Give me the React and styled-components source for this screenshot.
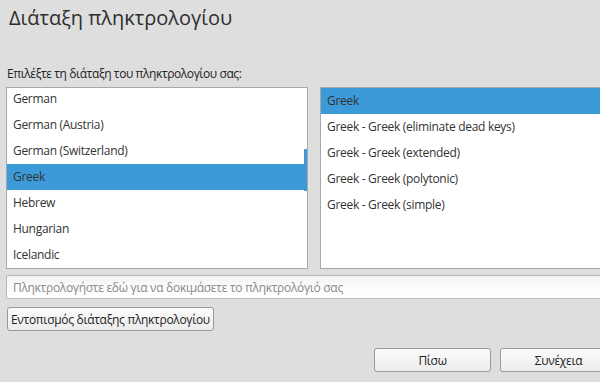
import React from "react";
import styled, { createGlobalStyle } from "styled-components";

const Global = createGlobalStyle`
  html, body { margin: 0; padding: 0; }
  body {
    background: #dedede;
    font-family: "Open Sans", "Noto Sans", sans-serif;
    color: #333;
    overflow: hidden;
    width: 600px;
    height: 382px;
  }
`;

const Page = styled.div`
  width: 600px;
  height: 382px;
  padding: 0 0 0 6px;
  box-sizing: border-box;
  display: flex;
  flex-direction: column;
  overflow: hidden;
`;

const Title = styled.h1`
  margin: 4px 0 0 3px;
  font-size: 20px;
  font-weight: 400;
  line-height: 28px;
  color: #2e2e2e;
`;

const Label = styled.div`
  margin: 34px 0 0 1px;
  font-size: 12px;
  line-height: 16px;
  letter-spacing: -0.4px;
  color: #222;
`;

const Lists = styled.div`
  display: flex;
  gap: 12px;
  margin-top: 5px;
  height: 182px;
`;

const ListBox = styled.div`
  position: relative;
  flex: 0 0 ${(p) => p.$w}px;
  height: 100%;
  box-sizing: border-box;
  background: #fff;
  border: 1px solid #a8a8a8;
  overflow: hidden;
`;

const Rows = styled.div`
  margin-top: ${(p) => p.$offset}px;
`;

const Row = styled.div`
  height: 26px;
  line-height: 26px;
  padding-left: 6px;
  font-size: 12px;
  letter-spacing: -0.3px;
  color: #333;
  background: ${(p) => (p.$selected ? "#3d9ad9" : "transparent")};
  white-space: nowrap;
`;

const Thumb = styled.div`
  position: absolute;
  right: 0;
  top: 61px;
  width: 3px;
  height: 42px;
  background: #3d9ad9;
`;

const Input = styled.input`
  margin-top: 6px;
  flex: 0 0 24px;
  width: 640px;
  height: 24px;
  box-sizing: border-box;
  border: 1px solid #b8b8b8;
  border-radius: 2px;
  background: linear-gradient(#f2f2f2, #fafafa 40%, #ffffff);
  padding: 0 6px;
  font-family: inherit;
  font-size: 12px;
  letter-spacing: -0.3px;
  color: #333;
  outline: none;
  &::placeholder { color: #8a8a8a; }
`;

const Button = styled.button`
  height: 24px;
  width: ${(p) => (p.$w ? `${p.$w}px` : "auto")};
  flex: 0 0 auto;
  padding: 0 3px;
  box-sizing: border-box;
  border: 1px solid #9a9a9a;
  border-radius: 3px;
  background: linear-gradient(#fbfbfb, #ececec);
  font-family: inherit;
  font-size: 12px;
  letter-spacing: -0.3px;
  color: #222;
  cursor: pointer;
`;

const DetectRow = styled.div`
  margin: 8px 0 0 1px;
  display: flex;
`;

const Footer = styled.div`
  margin-top: 17px;
  display: flex;
  gap: 9px;
  padding-left: 368px;
`;

const left = [
  "German",
  "German (Austria)",
  "German (Switzerland)",
  "Greek",
  "Hebrew",
  "Hungarian",
  "Icelandic",
];

const right = [
  "Greek",
  "Greek - Greek (eliminate dead keys)",
  "Greek - Greek (extended)",
  "Greek - Greek (polytonic)",
  "Greek - Greek (simple)",
];

export default function App() {
  return (
    <>
      <Global />
      <Page>
        <Title>Διάταξη πληκτρολογίου</Title>
        <Label>Επιλέξτε τη διάταξη του πληκτρολογίου σας:</Label>
        <Lists>
          <ListBox $w={302}>
            <Rows $offset={-2}>
              {left.map((t) => (
                <Row key={t} $selected={t === "Greek"}>{t}</Row>
              ))}
            </Rows>
            <Thumb />
          </ListBox>
          <ListBox $w={330}>
            <Rows $offset={0}>
              {right.map((t, i) => (
                <Row key={t} $selected={i === 0}>{t}</Row>
              ))}
            </Rows>
          </ListBox>
        </Lists>
        <Input placeholder="Πληκτρολογήστε εδώ για να δοκιμάσετε το πληκτρολόγιό σας" />
        <DetectRow>
          <Button>Εντοπισμός διάταξης πληκτρολογίου</Button>
        </DetectRow>
        <Footer>
          <Button $w={117}>Πίσω</Button>
          <Button $w={117}>Συνέχεια</Button>
        </Footer>
      </Page>
    </>
  );
}
